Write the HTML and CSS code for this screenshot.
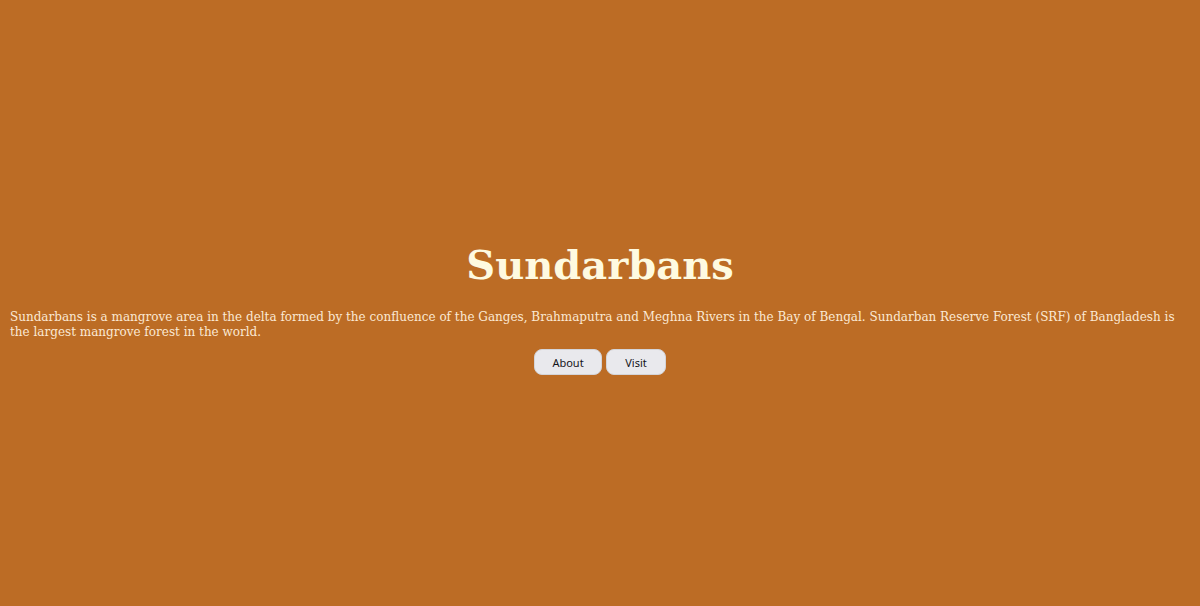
FILE: index.html
```html
<!DOCTYPE html>
<html>
<head>
<meta charset="utf-8">
<link rel="stylesheet" href="styles.css">
</head>
<body>
<main class="hero">
  <h1 class="title">Sundarbans</h1>
  <p class="text">Sundarbans is a mangrove area in the delta formed by the confluence of the Ganges, Brahmaputra and Meghna Rivers in the Bay of Bengal. Sundarban Reserve Forest (SRF) of Bangladesh is the largest mangrove forest in the world.</p>
  <div class="actions">
    <button class="btn btn-about">About</button>
    <button class="btn btn-visit">Visit</button>
  </div>
</main>
</body>
</html>
```
FILE: styles.css
```css
html, body {
  margin: 0;
  height: 100%;
}
body {
  background: #bc6c25;
  font-family: "DejaVu Serif", serif;
}
.hero {
  height: 100%;
  box-sizing: border-box;
  padding: 10px 10px 0;
  display: flex;
  flex-direction: column;
  justify-content: center;
  align-items: center;
}
.title {
  margin: 0 0 21px;
  font-size: 40px;
  font-weight: bold;
  color: #fefae0;
  line-height: 1.2;
}
.text {
  margin: 0 0 9px;
  font-size: 12px;
  line-height: 15px;
  color: #fbe9d4;
  align-self: stretch;
}
.actions {
  display: flex;
  gap: 4px;
}
.btn {
  font-family: "Noto Sans", "DejaVu Sans", sans-serif;
  font-size: 11px;
  font-weight: 400;
  color: #15141a;
  background: #e9e9ed;
  border: 1px solid #d4d4d8;
  border-radius: 8px;
  height: 26px;
  padding: 0;
}
.btn-about { width: 68px; }
.btn-visit { width: 60px; }
```
